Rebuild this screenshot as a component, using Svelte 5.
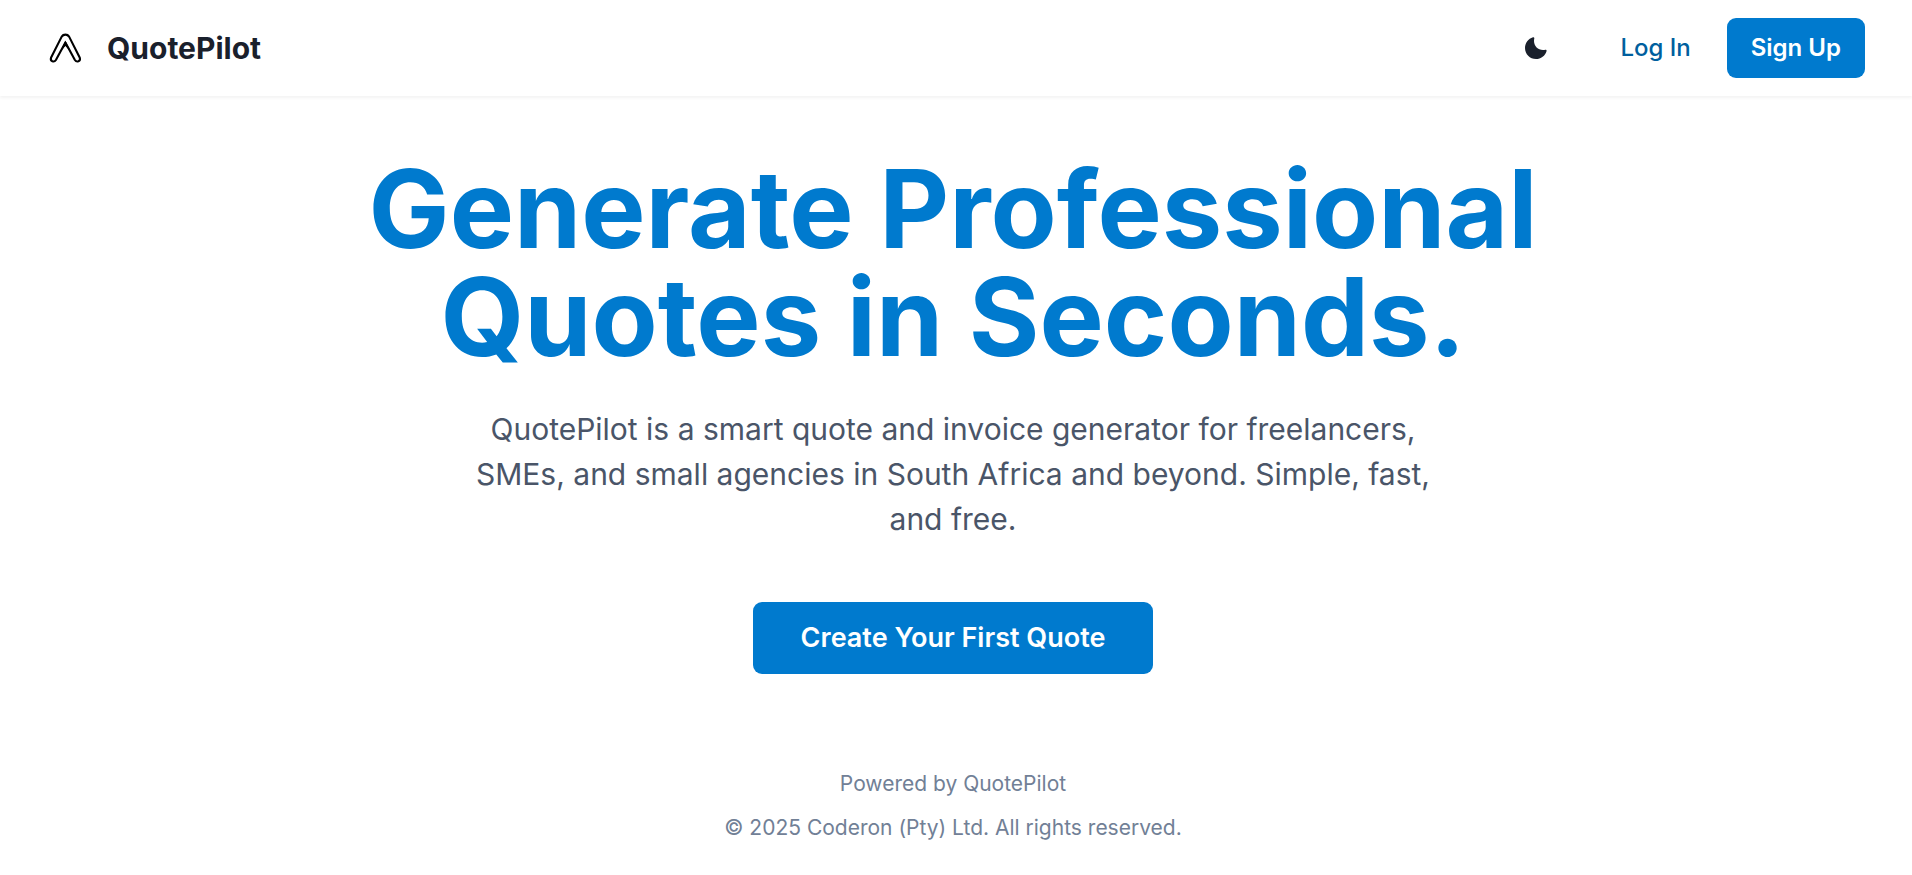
<script>
  let dark = $state(false);
</script>

<div class="page" class:dark>
  <header>
    <a class="brand" href="#home">
      <svg class="mark" viewBox="0 0 36 36" aria-hidden="true">
        <path
          d="M13.7 6.6Q15 4.6 17.4 4.6T21.1 6.6L31.8 27.8Q32.6 30.4 30.4 31.3Q28.2 32 26.9 30L17.4 12.5L7.9 30Q6.6 32 4.4 31.3Q2.2 30.4 3 27.8Z"
          fill="none" stroke="#000" stroke-width="2.1" stroke-linejoin="round" />
        <path d="M17.4 10.5L12.4 21.5L17.4 16L22.4 21.5Z" fill="#000" />
      </svg>
      <span>QuotePilot</span>
    </a>
    <nav>
      <button class="toggle" aria-label="Toggle color mode" onclick={() => (dark = !dark)}>
        <svg viewBox="0 0 24 24" aria-hidden="true">
          <path
            fill="currentColor"
            d="M21.4,13.7C20.6,13.9,19.8,14,19,14c-5,0-9-4-9-9c0-0.8,0.1-1.6,0.3-2.4c0.1-0.3,0-0.7-0.3-1c-0.3-0.3-0.6-0.4-1-0.3C4.3,2.7,1,7.1,1,12c0,6.1,4.9,11,11,11c4.9,0,9.3-3.3,10.6-8.1c0.1-0.3,0-0.7-0.3-1C22.1,13.7,21.7,13.6,21.4,13.7z" />
        </svg>
      </button>
      <a class="btn ghost" href="#login">Log In</a>
      <a class="btn solid" href="#signup">Sign Up</a>
    </nav>
  </header>

  <main>
    <h1>Generate Professional Quotes in Seconds.</h1>
    <p>
      QuotePilot is a smart quote and invoice generator for freelancers, SMEs, and small agencies in
      South Africa and beyond. Simple, fast, and free.
    </p>
    <a class="btn solid large" href="#create">Create Your First Quote</a>
  </main>

  <footer>
    <p>Powered by QuotePilot</p>
    <p>© 2025 Coderon (Pty) Ltd. All rights reserved.</p>
  </footer>
</div>

<style>
  :global(body) {
    margin: 0;
    background: #fff;
  }

  .page {
    min-height: 100vh;
    box-sizing: border-box;
    display: flex;
    flex-direction: column;
    font-family: Inter, "Liberation Sans", sans-serif;
    color: #1a202c;
    background: #fff;
  }

  header {
    display: flex;
    align-items: center;
    justify-content: space-between;
    padding: 18px 47px 18px 48px;
    box-shadow: 0 2px 3px rgba(0, 0, 0, 0.05);
  }

  a {
    color: inherit;
    text-decoration: none;
  }

  .brand {
    display: flex;
    align-items: center;
    gap: 23px;
    font-size: 30px;
    line-height: 45px;
    font-weight: 700;
  }

  .mark {
    width: 36px;
    height: 36px;
  }

  nav {
    display: flex;
    align-items: center;
    gap: 12px;
  }

  .toggle {
    display: flex;
    align-items: center;
    justify-content: center;
    width: 60px;
    height: 60px;
    margin-right: 18px;
    padding: 0;
    border: 0;
    border-radius: 9px;
    background: transparent;
    color: inherit;
    cursor: pointer;
  }

  .toggle svg {
    width: 24px;
    height: 24px;
  }

  .btn {
    display: inline-flex;
    align-items: center;
    justify-content: center;
    height: 60px;
    padding: 0 24px;
    border-radius: 9px;
    font-size: 24px;
    line-height: 30px;
    font-weight: 600;
    white-space: nowrap;
  }

  .ghost {
    color: #005f9e;
    font-weight: 500;
  }

  .solid {
    background: #007ace;
    color: #fff;
  }

  .large {
    height: 72px;
    padding: 0 48px;
    font-size: 27px;
  }

  main,
  footer {
    display: flex;
    flex-direction: column;
    align-items: center;
    padding: 0 30px 0 24px;
    text-align: center;
  }

  main {
    flex: 1;
    padding-top: 59px;
  }

  h1 {
    max-width: 1296px;
    margin: 0 0 36px;
    font-size: 108px;
    line-height: 108px;
    font-weight: 700;
    color: #007ace;
  }

  main p {
    max-width: 960px;
    margin: 0 0 60px;
    font-size: 30px;
    line-height: 45px;
    color: #4a5568;
  }

  footer {
    gap: 12px;
    padding-top: 36px;
    padding-bottom: 31px;
    font-size: 21px;
    line-height: 32px;
    color: #718096;
  }

  footer p {
    margin: 0;
  }

  .dark {
    color: #f7fafc;
    background: #1a202c;
  }

  .dark .mark {
    filter: invert(1);
  }

  .dark main p,
  .dark footer {
    color: #cbd5e0;
  }

  .dark .ghost {
    color: #63b3ed;
  }
</style>
